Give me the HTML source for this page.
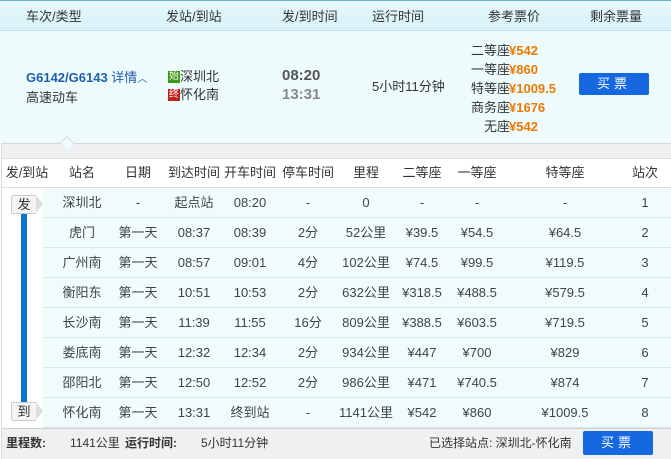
<!DOCTYPE html>
<html><head><meta charset="utf-8"><style>
*{margin:0;padding:0;box-sizing:border-box}
body{width:671px;height:459px;overflow:hidden;background:#fff;font-family:"Liberation Sans","Noto Sans CJK SC",sans-serif;font-size:13px;color:#333;position:relative}
.a{position:absolute;white-space:nowrap;line-height:16px}
.o{color:#f07800;font-weight:bold}
.btn{position:absolute;background:#1668e0;color:#fff;text-align:center;border-radius:2px;font-size:13px;letter-spacing:4px}
.c{position:absolute;text-align:center;white-space:nowrap;line-height:16px;height:16px}
.tag{position:absolute;left:11px;width:25px;height:19px;background:#f4f4f4;border:1px solid #ccc;border-right:none;border-radius:2px 0 0 2px;text-align:center;line-height:17px;font-size:13px}
.tag:after{content:"";position:absolute;right:-7px;top:-1px;border-left:7px solid #ddd;border-top:9.5px solid transparent;border-bottom:9.5px solid transparent}
.f{font-size:12px;top:435px}
</style></head><body>
<div class="a" style="left:0;top:0;width:671px;height:31px;background:linear-gradient(#e6f8fb,#d6f1f7);border-top:1px solid #6fb4c4;border-bottom:1px solid #bfe0e8"></div>
<div class="a" style="left:0;top:31px;width:671px;height:112px;background:#eefbfd"></div>
<div class="a" style="left:26px;top:9px">车次/类型</div>
<div class="a" style="left:166px;top:9px">发站/到站</div>
<div class="a" style="left:282px;top:9px">发/到时间</div>
<div class="a" style="left:372px;top:9px">运行时间</div>
<div class="a" style="left:488px;top:9px">参考票价</div>
<div class="a" style="left:590px;top:9px">剩余票量</div>
<div class="a" style="left:26px;top:70px;color:#1d5fae;font-weight:bold;font-size:13px">G6142/G6143 <span style="font-weight:normal">详情</span><span style="font-size:10px;font-weight:normal">︿</span></div>
<div class="a" style="left:26px;top:90px;font-size:13px">高速动车</div>
<div class="a" style="left:168px;top:71px;width:12px;height:12px;background:#3c9a12;color:#fff;font-size:10px;line-height:12px;text-align:center">始</div>
<div class="a" style="left:180px;top:69px;font-size:13px">深圳北</div>
<div class="a" style="left:168px;top:89px;width:12px;height:12px;background:#c0231b;color:#fff;font-size:10px;line-height:12px;text-align:center">终</div>
<div class="a" style="left:180px;top:87px;font-size:13px">怀化南</div>
<div class="a" style="left:282px;top:68px;font-size:15px;font-weight:bold;color:#555">08:20</div>
<div class="a" style="left:282px;top:87px;font-size:15px;font-weight:bold;color:#888">13:31</div>
<div class="a" style="left:372px;top:79px">5小时11分钟</div>
<div class="a" style="left:430px;top:41px;width:80px;text-align:right;line-height:19px">二等座<br>一等座<br>特等座<br>商务座<br>无座</div>
<div class="a o" style="left:509px;top:41px;line-height:19px;font-size:13px">¥542<br>¥860<br>¥1009.5<br>¥1676<br>¥542</div>
<div class="btn" style="left:579px;top:73px;width:70px;height:22px;line-height:22px">买票</div>
<div class="a" style="left:1px;top:143px;width:670px;height:316px;background:#eef0f2;border-top:1px solid #d8d8d8;border-left:1px solid #d8d8d8"></div>
<div class="a" style="left:62px;top:138px;width:10px;height:10px;background:#eefbfd;border-top:1px solid #d8d8d8;border-left:1px solid #d8d8d8;transform:rotate(45deg)"></div>
<div class="a" style="left:2px;top:158px;width:669px;height:30px;background:#fff;border-top:1px solid #ddd;border-bottom:1px solid #ddd"></div>
<div class="a" style="left:2px;top:188px;width:41px;height:240px;background:#fff"></div>
<div class="a" style="left:43px;top:188px;width:628px;height:240px;background:repeating-linear-gradient(#effbfd 0 29px,#d8e8ec 29px 30px)"></div>
<div class="a" style="left:21px;top:210px;width:6px;height:192px;background:#0e76c8"></div>
<div class="tag" style="top:195px">发</div>
<div class="tag" style="top:402px">到</div>
<div id="t"></div>
<div class="a" style="left:2px;top:428px;width:669px;height:31px;background:#eef0f2;border-top:1px solid #d0d0d0"></div>
<div class="a f" style="left:6px;font-weight:bold">里程数:</div>
<div class="a f" style="left:70px">1141公里</div>
<div class="a f" style="left:125px;font-weight:bold">运行时间:</div>
<div class="a f" style="left:201px">5小时11分钟</div>
<div class="a f" style="left:429px">已选择站点: 深圳北-怀化南</div>
<div class="btn" style="left:583px;top:431px;width:70px;height:24px;line-height:24px">买票</div>
<script>
var cx=[27,82,138,194,250,308,366,422,477,565,645];
var h=["发/到站","站名","日期","到达时间","开车时间","停车时间","里程","二等座","一等座","特等座","站次"];
var rows=[
["","深圳北","-","起点站","08:20","-","0","-","-","-","1"],
["","虎门","第一天","08:37","08:39","2分","52公里","¥39.5","¥54.5","¥64.5","2"],
["","广州南","第一天","08:57","09:01","4分","102公里","¥74.5","¥99.5","¥119.5","3"],
["","衡阳东","第一天","10:51","10:53","2分","632公里","¥318.5","¥488.5","¥579.5","4"],
["","长沙南","第一天","11:39","11:55","16分","809公里","¥388.5","¥603.5","¥719.5","5"],
["","娄底南","第一天","12:32","12:34","2分","934公里","¥447","¥700","¥829","6"],
["","邵阳北","第一天","12:50","12:52","2分","986公里","¥471","¥740.5","¥874","7"],
["","怀化南","第一天","13:31","终到站","-","1141公里","¥542","¥860","¥1009.5","8"]];
var s="";
function put(y,arr,col){for(var i=0;i<arr.length;i++){if(!arr[i])continue;s+='<div class="c" style="left:'+(cx[i]-50)+'px;width:100px;top:'+y+'px;color:'+col+'">'+arr[i]+'</div>';}}
put(165,h,"#333");
rows.forEach(function(r,k){put(195+k*30,r,"#444");});
document.getElementById("t").outerHTML=s;
</script>
</body></html>
